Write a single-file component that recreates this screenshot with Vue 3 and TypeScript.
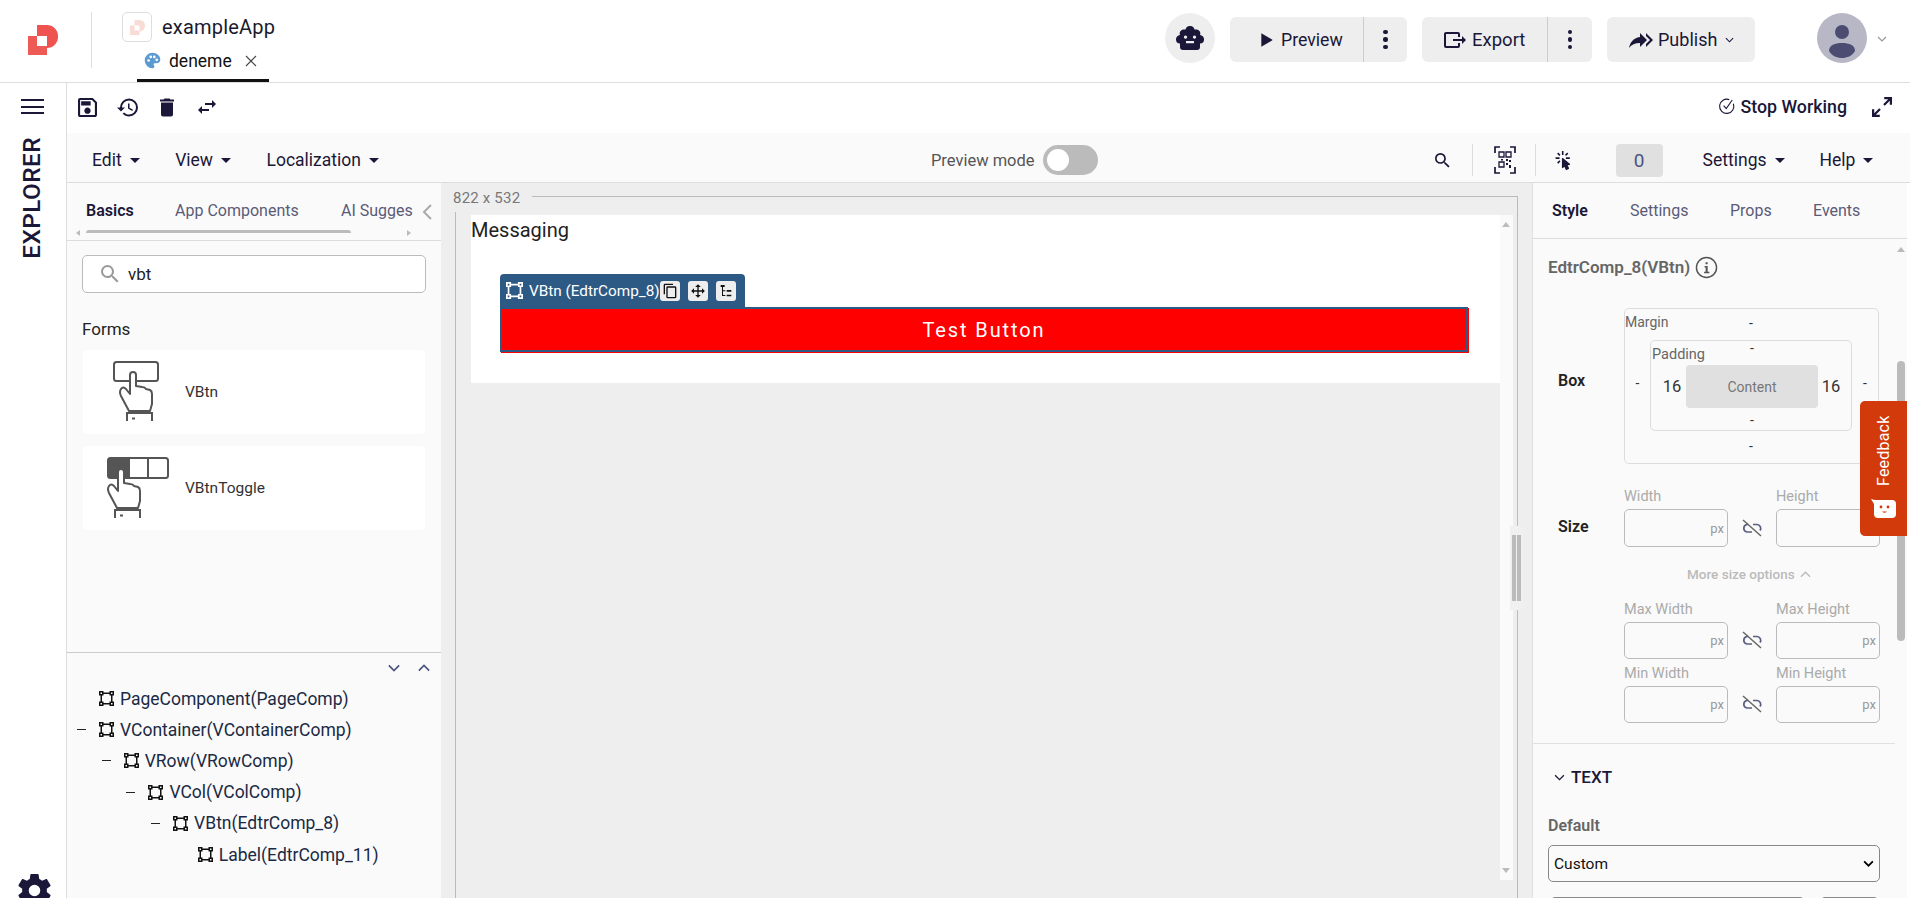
<script setup lang="ts">
const ic = {
  save: 'M17 3H5C3.89 3 3 3.9 3 5V19C3 20.1 3.89 21 5 21H19C20.1 21 21 20.1 21 19V7L17 3M19 19H5V5H16.17L19 7.83V19M12 12C10.34 12 9 13.34 9 15S10.34 18 12 18 15 16.66 15 15 13.66 12 12 12M6 6H15V10H6V6Z',
  history: 'M13.5,8H12V13L16.28,15.54L17,14.33L13.5,12.25V8M13,3A9,9 0 0,0 4,12H1L4.96,16.03L9,12H6A7,7 0 0,1 13,5A7,7 0 0,1 20,12A7,7 0 0,1 13,19C11.07,19 9.32,18.21 8.06,16.94L6.64,18.36C8.27,20 10.5,21 13,21A9,9 0 0,0 22,12A9,9 0 0,0 13,3',
  trash: 'M19,4H15.5L14.5,3H9.5L8.5,4H5V6H19M6,19A2,2 0 0,0 8,21H16A2,2 0 0,0 18,19V7H6V19Z',
  swap: 'M21,9L17,5V8H10V10H17V13M7,11L3,15L7,19V16H14V14H7V11Z',
  exportI: 'M23,12L19,8V11H10V13H19V16M1,18V6C1,4.89 1.9,4 3,4H15A2,2 0 0,1 17,6V9H15V6H3V18H15V15H17V18A2,2 0 0,1 15,20H3A2,2 0 0,1 1,18Z',
  publish: 'M11 5L18 12L11 19V14.9C6 14.9 2.5 16.5 0 20C1 15 4 10 11 9V5M17 5L24 12L17 19V16L21 12L17 8Z',
  expand: 'M10,21V19H6.41L10.91,14.5L9.5,13.09L5,17.59V14H3V21H10M14.5,10.91L19,6.41V10H21V3H14V5H17.59L13.09,9.5L14.5,10.91Z',
  search: 'M9.5,3A6.5,6.5 0 0,1 16,9.5C16,11.11 15.41,12.59 14.44,13.73L14.71,14H15.5L20.5,19L19,20.5L14,15.5V14.71L13.73,14.44C12.59,15.41 11.11,16 9.5,16A6.5,6.5 0 0,1 3,9.5A6.5,6.5 0 0,1 9.5,3M9.5,5C7,5 5,7 5,9.5C5,12 7,14 9.5,14C12,14 14,12 14,9.5C14,7 12,5 9.5,5Z',
  click: 'M10.76,8.69A0.76,0.76 0 0,0 10,9.45V20.9C10,21.32 10.34,21.66 10.76,21.66C10.95,21.66 11.11,21.6 11.24,21.5L13.15,19.95L14.81,23.57C14.94,23.84 15.21,24 15.5,24C15.61,24 15.72,24 15.83,23.92L18.59,22.64C18.97,22.46 19.15,22 18.95,21.63L17.28,18L19.69,17.55C19.85,17.5 20,17.43 20.12,17.29C20.39,16.97 20.35,16.5 20,16.21L11.26,8.86L11.25,8.87C11.12,8.76 10.95,8.69 10.76,8.69M15,10V8H20V10H15M13.83,4.76L16.66,1.93L18.07,3.34L15.24,6.17L13.83,4.76M10,0H12V5H10V0M3.93,14.66L6.76,11.83L8.17,13.24L5.34,16.07L3.93,14.66M3.93,3.34L5.34,1.93L8.17,4.76L6.76,6.17L3.93,3.34M7,10H2V8H7V10',
  square: 'M2,2H8V4H16V2H22V8H20V16H22V22H16V20H8V22H2V16H4V8H2V2M16,8V6H8V8H6V16H8V18H16V16H18V8H16M4,4V6H6V4H4M18,4V6H20V4H18M4,18V20H6V18H4M18,18V20H20V18H18Z',
  copy: 'M19,21H8V7H19M19,5H8A2,2 0 0,0 6,7V21A2,2 0 0,0 8,23H19A2,2 0 0,0 21,21V7A2,2 0 0,0 19,5M16,1H4A2,2 0 0,0 2,3V17H4V3H16V1Z',
  move: 'M13,6V11H18V7.75L22.25,12L18,16.25V13H13V18H16.25L12,22.25L7.75,18H11V13H6V16.25L1.75,12L6,7.75V11H11V6H7.75L12,1.75L16.25,6H13Z',
  tree: 'M4 3H10V6H4ZM6 6H7.5V18H11V19.5H6ZM7 11H11V12.5H7ZM13 10.500H20V13H13ZM13 17.500H20V20H13Z',
  gear: 'M12,15.5A3.5,3.5 0 0,1 8.5,12A3.5,3.5 0 0,1 12,8.5A3.5,3.5 0 0,1 15.5,12A3.5,3.5 0 0,1 12,15.5M19.43,12.97C19.47,12.65 19.5,12.33 19.5,12C19.5,11.67 19.47,11.34 19.43,11L21.54,9.37C21.73,9.22 21.78,8.95 21.66,8.73L19.66,5.27C19.54,5.05 19.27,4.96 19.05,5.05L16.56,6.05C16.04,5.66 15.5,5.32 14.87,5.07L14.5,2.42C14.46,2.18 14.25,2 14,2H10C9.75,2 9.54,2.18 9.5,2.42L9.13,5.07C8.5,5.32 7.96,5.66 7.44,6.05L4.95,5.05C4.73,4.96 4.46,5.05 4.34,5.27L2.34,8.73C2.21,8.95 2.27,9.22 2.46,9.37L4.57,11C4.53,11.34 4.5,11.67 4.5,12C4.5,12.33 4.53,12.65 4.57,12.97L2.46,14.63C2.27,14.78 2.21,15.05 2.34,15.27L4.34,18.73C4.46,18.95 4.73,19.03 4.95,18.95L7.44,17.94C7.96,18.34 8.5,18.68 9.13,18.93L9.5,21.58C9.54,21.82 9.75,22 10,22H14C14.25,22 14.46,21.82 14.5,21.58L14.87,18.93C15.5,18.67 16.04,18.34 16.56,17.94L19.05,18.95C19.27,19.03 19.54,18.95 19.66,18.73L21.66,15.27C21.78,15.05 21.73,14.78 21.54,14.63L19.43,12.97Z',
  info: 'M11 6.500h2.200v2.200H11ZM10 10.500h3.200v6H15V18H9.500v-1.500h1.600v-4.500H10Z',
}
const hand = 'M16 50L8 35Q6 31 8 28Q10 25 13 28L17 33V14A3 3 0 0 1 23 14V25L29 26Q32 26 33 28L37 29Q39 30 39 33V43L37 50Z'
const menus = ['Edit', 'View', 'Localization']
const leftTabs = [
  { t: 'Basics', on: true, w: 89 },
  { t: 'App Components', on: false, w: 166 },
  { t: 'AI Sugges', on: false, w: 81 },
]
const rightTabs = [
  { t: 'Style', on: true, w: 78 },
  { t: 'Settings', on: false, w: 100 },
  { t: 'Props', on: false, w: 83 },
  { t: 'Events', on: false, w: 70 },
]
const treeRows = [
  { t: 'PageComponent(PageComp)', d: 0, dash: false },
  { t: 'VContainer(VContainerComp)', d: 0, dash: true },
  { t: 'VRow(VRowComp)', d: 1, dash: true },
  { t: 'VCol(VColComp)', d: 2, dash: true },
  { t: 'VBtn(EdtrComp_8)', d: 3, dash: true },
  { t: 'Label(EdtrComp_11)', d: 4, dash: false },
]
const sizeRows = [
  { a: 'Max Width', b: 'Max Height' },
  { a: 'Min Width', b: 'Min Height' },
]
</script>

<template>
  <div class="app">
    <header class="top">
      <div class="logo-wrap">
        <svg class="logo" viewBox="0 0 30 30">
          <path fill="#ef5350" d="M9 0H19A11 11 0 0 1 30 11V12A11 11 0 0 1 19 23V11H9Z" />
          <path fill="#ee5a55" d="M0 11H9V21H19V30H0Z" />
        </svg>
      </div>
      <div class="app-info">
        <div class="app-name">
          <span class="app-ico">
            <svg viewBox="0 0 30 30"><path fill="#f9dcd6" d="M9 0H19A11 11 0 0 1 30 11V12A11 11 0 0 1 19 23V11H9Z" /><path fill="#f9dcd6" d="M0 11H9V21H19V30H0Z" /></svg>
          </span>
          <span>exampleApp</span>
        </div>
        <div class="file-tab">
          <svg class="palette" viewBox="0 0 24 24"><path fill="#5b9bd1" d="M12 1a11 11 0 0 0 0 22c1.600 0 2.600-1.100 2.600-2.500 0-.7-.3-1.200-.6-1.700-.3-.4-.5-.8-.5-1.300 0-1 .8-1.700 1.800-1.700h2.200A5.500 5.500 0 0 0 23 10.500C23 5.200 18 1 12 1Z" /><g fill="#fff"><circle cx="6.500" cy="12" r="1.900" /><circle cx="9.500" cy="7" r="1.900" /><circle cx="14.500" cy="7" r="1.900" /><circle cx="18" cy="11" r="1.900" /></g></svg>
          <span>deneme</span>
          <svg class="close" viewBox="0 0 12 12"><path d="M1 1L11 11M11 1L1 11" stroke="#444" stroke-width="1.100" fill="none" /></svg>
        </div>
      </div>
      <div class="top-actions">
        <span class="robot">
          <svg viewBox="0 0 28 24" width="28" height="24"><path fill-rule="evenodd" fill="#1a1738" d="M14 0a4.500 4.500 0 0 1 4.500 3.500H21a4 4 0 0 1 3 5.500 4.200 4.200 0 0 1 4 4.500 4 4 0 0 1-4 4V21a3 3 0 0 1-3 3H7a3 3 0 0 1-3-3v-3.500a4 4 0 0 1-4-4A4.200 4.200 0 0 1 4 9 4 4 0 0 1 7 3.500h2.500A4.500 4.500 0 0 1 14 0ZM10 15v2.200h8V15ZM9.500 9.500a1.600 1.600 0 1 0 .01 0ZM18.500 9.500a1.600 1.600 0 1 0 .01 0Z" /></svg>
        </span>
        <div class="btn-group g-preview">
          <div class="btn-main"><svg class="play" viewBox="0 0 12 14"><path d="M1 1L11 7L1 13Z" fill="#1a1738" /></svg><span>Preview</span></div>
          <div class="btn-more"><i /><i /><i /></div>
        </div>
        <div class="btn-group g-export">
          <div class="btn-main"><svg class="ex" viewBox="0 0 24 24"><path :d="ic.exportI" fill="#1a1738" /></svg><span>Export</span></div>
          <div class="btn-more"><i /><i /><i /></div>
        </div>
        <div class="btn-group g-publish">
          <div class="btn-main"><svg class="pub" viewBox="0 0 24 24"><path :d="ic.publish" fill="#1a1738" /></svg><span>Publish</span><svg class="chev" viewBox="0 0 10 6"><path d="M1 1L5 5L9 1" fill="none" stroke="#1a1738" stroke-width="1.200" /></svg></div>
        </div>
        <span class="avatar">
          <svg viewBox="0 0 50 50" width="50" height="50"><circle cx="25" cy="25" r="25" fill="#b7b7c6" /><circle cx="25" cy="19" r="7" fill="#4c4c73" /><path d="M12 38c0-6 6-8 13-8s13 2 13 8c-3 5-8 7-13 7s-10-2-13-7Z" fill="#4c4c73" /></svg>
        </span>
        <svg class="avatar-chev" viewBox="0 0 10 6"><path d="M1 1L5 5L9 1" fill="none" stroke="#999" stroke-width="1.200" /></svg>
      </div>
    </header>

    <div class="body">
      <aside class="rail">
        <div class="hamb"><i /><i /><i /></div>
        <div class="explorer">EXPLORER</div>
        <svg class="gear" viewBox="2 2 20 20"><path :d="ic.gear" fill="#1a1738" /></svg>
      </aside>

      <main class="main">
        <div class="tools">
          <svg class="t t-save" viewBox="3 3 18 18"><path :d="ic.save" fill="#1a1738" /></svg>
          <svg class="t t-hist" viewBox="1 3 21 18"><path :d="ic.history" fill="#1a1738" /></svg>
          <svg class="t t-trash" viewBox="5 3 14 18"><path :d="ic.trash" fill="#1a1738" /></svg>
          <svg class="t t-swap" viewBox="3 5 18 14"><path :d="ic.swap" fill="#1a1738" /></svg>
          <div class="stop">
            <svg viewBox="0 0 24 24" class="stop-ic"><path d="M20.500 9A9.500 9.500 0 1 1 15 3.500" fill="none" stroke="#1a1738" stroke-width="1.500" /><path d="M7.500 11.500L11 15.500L19 4" fill="none" stroke="#1a1738" stroke-width="1.500" /></svg>
            <span>Stop Working</span>
          </div>
          <svg class="t-exp" viewBox="3 3 18 18"><path :d="ic.expand" fill="#1a1738" /></svg>
        </div>

        <div class="menubar">
          <div v-for="m in menus" :key="m" class="menu"><span>{{ m }}</span><b class="caret" /></div>
          <div class="pm"><span>Preview mode</span><span class="switch"><i /></span></div>
          <svg class="mb-search" viewBox="3 3 18 18"><path :d="ic.search" fill="#1a1738" /></svg>
          <span class="vr v1" />
          <svg class="qr" viewBox="0 0 22 30">
            <path d="M1 8V2H6M16 2H21V8M1 22V28H6M16 28H21V22" fill="none" stroke="#1a1738" stroke-width="1.700" />
            <path d="M5 7H10V12H5ZM12 7H17V12H12ZM5 17H10V22H5Z" fill="none" stroke="#1a1738" stroke-width="1.300" />
            <path d="M12 14H14V16H12ZM15 15H17V17H15ZM12 18H14V20H12ZM15 20H17V23H15ZM7 14H9V15.500H7Z" fill="#1a1738" />
          </svg>
          <span class="vr v2" />
          <svg class="cl" viewBox="0 0 24 24"><path :d="ic.click" fill="#1a1738" /></svg>
          <span class="zero">0</span>
          <div class="menu m-settings"><span>Settings</span><b class="caret" /></div>
          <div class="menu m-help"><span>Help</span><b class="caret" /></div>
        </div>

        <div class="work">
          <section class="left">
            <div class="ltabs">
              <span v-for="t in leftTabs" :key="t.t" class="ltab" :class="{ on: t.on }" :style="{ width: t.w + 'px' }">{{ t.t }}</span>
              <svg class="ltab-chev" viewBox="0 0 10 16"><path d="M9 1L2 8L9 15" fill="none" stroke="#aaa" stroke-width="2" /></svg>
            </div>
            <div class="lscroll"><i class="arr-l" /><span class="lthumb" /><i class="arr-r" /></div>
            <div class="search">
              <svg viewBox="3 3 18 18" class="s-ic"><path :d="ic.search" fill="#999" /></svg>
              <span>vbt</span>
            </div>
            <div class="forms">Forms</div>
            <div class="comp">
              <svg class="hand" viewBox="0 0 50 62" width="50" height="62">
                <rect x="1" y="1" width="44" height="19" rx="2.500" fill="none" stroke="#555" stroke-width="2" />
                <path :d="hand" fill="#fff" stroke="#555" stroke-width="2" stroke-linejoin="round" />
                <path d="M14 60V52H39V60" fill="none" stroke="#555" stroke-width="2" />
                <path d="M19 57.500H22" stroke="#555" stroke-width="2" />
              </svg>
              <span>VBtn</span>
            </div>
            <div class="comp c2">
              <svg class="hand h2" viewBox="0 0 62 62" width="62" height="62">
                <rect x="1" y="1" width="60" height="20" rx="2.500" fill="#fff" stroke="#555" stroke-width="2" />
                <path d="M1 3.500A2.500 2.500 0 0 1 3.500 1H23V21H3.500A2.500 2.500 0 0 1 1 18.500Z" fill="#555" />
                <path d="M41 1V21" stroke="#555" stroke-width="2" />
                <path :d="hand" fill="#fff" stroke="#555" stroke-width="2" stroke-linejoin="round" transform="translate(-6,1)" />
                <path d="M8 61V53H33V61" fill="none" stroke="#555" stroke-width="2" />
                <path d="M13 58.500H16" stroke="#555" stroke-width="2" />
              </svg>
              <span>VBtnToggle</span>
            </div>
            <div class="tree">
              <div class="tree-tools">
                <svg viewBox="0 0 14 9"><path d="M1 1.500L7 7.500L13 1.500" fill="none" stroke="#4a5580" stroke-width="2" /></svg>
                <svg viewBox="0 0 14 9"><path d="M1 7.500L7 1.500L13 7.500" fill="none" stroke="#4a5580" stroke-width="2" /></svg>
              </div>
              <div v-for="r in treeRows" :key="r.t" class="node" :style="{ paddingLeft: r.d * 24.7 + 'px' }">
                <span class="dash" :class="{ vis: r.dash }" />
                <svg viewBox="2 2 20 20" class="n-ic"><path :d="ic.square" fill="#111" /></svg>
                <span>{{ r.t }}</span>
              </div>
            </div>
          </section>

          <section class="canvas">
            <div class="dim"><span>822 x 532</span><i class="dim-line" /></div>
            <div class="frame">
              <div class="view">
                <div class="doc">
                  <div class="sheet">
                    <div class="msg">Messaging</div>
                    <div class="chip">
                      <svg viewBox="2 2 20 20" class="chip-ic"><path :d="ic.square" fill="#fff" /></svg>
                      <span class="chip-t">VBtn (EdtrComp_8)</span>
                      <span class="chip-b"><svg viewBox="1 0 21 24"><path :d="ic.copy" fill="#111" /></svg></span>
                      <span class="chip-b"><svg viewBox="0 0 24 24"><path :d="ic.move" fill="#111" /></svg></span>
                      <span class="chip-b"><svg viewBox="0 0 24 24"><path :d="ic.tree" fill="#111" /></svg></span>
                    </div>
                    <div class="test">Test Button</div>
                  </div>
                </div>
                <div class="vtrack"><i class="up" /><i class="down" /></div>
              </div>
            </div>
            <div class="grip"><i /><i /></div>
          </section>

          <section class="right">
            <div class="rtabs">
              <span v-for="t in rightTabs" :key="t.t" class="rtab" :class="{ on: t.on }" :style="{ width: t.w + 'px' }">{{ t.t }}</span>
            </div>
            <div class="props">
              <i class="p-up" /><span class="p-thumb" />
              <div class="ptitle"><span>EdtrComp_8(VBtn)</span>
                <svg viewBox="0 0 24 24" class="p-info"><circle cx="12" cy="12" r="10.500" fill="none" stroke="#555" stroke-width="1.500" /><path :d="ic.info" fill="#555" /></svg>
              </div>
              <div class="row-box">
                <span class="blabel">Box</span>
                <div class="mbox">
                  <span class="cap">Margin</span><span class="mtop">-</span>
                  <span class="mleft">-</span>
                  <div class="pbox">
                    <span class="cap pcap">Padding</span><span class="ptop">-</span>
                    <span class="pl">16</span>
                    <div class="content">Content</div>
                    <span class="pr">16</span>
                    <span class="pbot">-</span>
                  </div>
                  <span class="mright">-</span>
                  <span class="mbot">-</span>
                </div>
              </div>
              <div class="row-size">
                <span class="blabel slabel">Size</span>
                <div class="pair">
                  <div class="fld"><label>Width</label><div class="inp"><span>px</span></div></div>
                  <svg viewBox="0 0 22 18" class="lnk"><path d="M7 5.500H6A3.800 3.800 0 0 0 6 13H11M12 5.500H16A3.800 3.800 0 0 1 19 11.500" fill="none" stroke="#5a6080" stroke-width="1.700" /><path d="M2 1L20 17" stroke="#666" stroke-width="1.500" /></svg>
                  <div class="fld"><label>Height</label><div class="inp"><span>px</span></div></div>
                </div>
              </div>
              <div class="more"><span>More size options</span><svg viewBox="0 0 12 7"><path d="M1 6L6 1L11 6" fill="none" stroke="#bbb" stroke-width="1.500" /></svg></div>
              <div v-for="r in sizeRows" :key="r.a" class="pair pair-m">
                <div class="fld"><label>{{ r.a }}</label><div class="inp"><span>px</span></div></div>
                <svg viewBox="0 0 22 18" class="lnk"><path d="M7 5.500H6A3.800 3.800 0 0 0 6 13H11M12 5.500H16A3.800 3.800 0 0 1 19 11.500" fill="none" stroke="#5a6080" stroke-width="1.700" /><path d="M2 1L20 17" stroke="#666" stroke-width="1.500" /></svg>
                <div class="fld"><label>{{ r.b }}</label><div class="inp"><span>px</span></div></div>
              </div>
              <div class="hr" />
              <div class="sec"><svg viewBox="0 0 12 8"><path d="M1 1.500L6 6.500L11 1.500" fill="none" stroke="#1a1738" stroke-width="1.500" /></svg><span>TEXT</span></div>
              <div class="deflabel">Default</div>
              <div class="select"><span>Custom</span><svg viewBox="0 0 12 8"><path d="M1 1.500L6 6.500L11 1.500" fill="none" stroke="#000" stroke-width="2" /></svg></div>
              <div class="next"><i class="n1" /><i class="n2" /></div>
            </div>
          </section>
        </div>
      </main>
    </div>

    <div class="feedback">
      <span class="fb-t">Feedback</span>
      <svg viewBox="0 0 25 20" class="fb-i"><path d="M0 0L4 1H21Q25 1 25 5V15Q25 19 21 19H7Q3 19 3 15V5Z" fill="#fff" /><circle cx="10" cy="8" r="1.400" fill="#d23a0c" /><circle cx="17" cy="8" r="1.400" fill="#d23a0c" /><path d="M11 12.500Q13.500 15 16 12.500Z" fill="#d23a0c" /></svg>
    </div>
  </div>
</template>

<style>
html, body { margin: 0; overflow: hidden; background: #fff; }
</style>

<style scoped>
.app { position: relative; width: 1910px; height: 898px; overflow: hidden; display: flex; flex-direction: column; font-family: Roboto, "Liberation Sans", sans-serif; color: #1a1738; background: #fff; }
i, b { display: block; font-style: normal; }

.top { height: 82px; flex: none; display: flex; border-bottom: 1px solid #ddd; box-sizing: content-box; }
.logo-wrap { width: 92px; height: 56px; margin-top: 12px; box-sizing: border-box; border-right: 1px solid #ddd; padding: 13px 0 0 28px; }
.logo { width: 30px; height: 30px; display: block; }
.app-info { margin-left: 30px; display: flex; flex-direction: column; }
.app-name { display: flex; align-items: center; height: 30px; margin-top: 12px; font-size: 20px; color: #1a1a2e; gap: 10px; letter-spacing: .2px; }
.app-ico { width: 28px; height: 28px; border: 1px solid #ddd; border-radius: 5px; display: flex; align-items: center; justify-content: center; }
.app-ico svg { width: 15px; height: 15px; }
.file-tab { margin: 3px 0 0 15px; width: 132px; height: 37px; box-sizing: border-box; border-bottom: 3px solid #111; display: flex; align-items: center; padding-left: 7px; font-size: 17.500px; padding-bottom: 3px; color: #111; }
.palette { width: 17px; height: 17px; margin-right: 8px; }
.close { width: 12px; height: 12px; margin-left: 13px; }
.top-actions { margin-left: auto; display: flex; align-items: flex-start; padding-top: 13px; }
.robot { width: 50px; height: 50px; border-radius: 50%; background: #eee; display: flex; align-items: center; justify-content: center; margin-right: 15px; }
.btn-group { height: 45px; margin-top: 4px; background: #eee; border-radius: 6px; display: flex; font-size: 17.700px; color: #1a1738; }
.btn-main { display: flex; align-items: center; }
.btn-more { display: flex; flex-direction: column; align-items: center; justify-content: center; gap: 3px; border-left: 1px solid #ccc; }
.btn-more i { width: 4.500px; height: 4.500px; border-radius: 50%; background: #1a1738; }
.g-preview { width: 177px; margin-right: 15px; }
.g-preview .btn-main { width: 133px; padding-left: 30px; box-sizing: border-box; }
.g-preview .btn-more { flex: 1; }
.play { width: 14px; height: 16px; margin-left: 0; margin-right: 7px; }
.g-export { width: 170px; margin-right: 15px; }
.g-export .btn-main { width: 125px; padding-left: 21px; box-sizing: border-box; font-size: 18.500px; }
.g-export .btn-more { flex: 1; }
.ex { width: 24px; height: 24px; margin-right: 5px; }
.g-publish { width: 148px; margin-right: 62px; }
.g-publish .btn-main { padding-left: 22px; font-size: 18px; }
.pub { width: 24px; height: 24px; margin-right: 5px; }
.chev { width: 9px; height: 6px; margin-left: 8px; }
.avatar { width: 50px; height: 50px; display: block; }
.avatar-chev { width: 10px; height: 6px; margin: 23px 23px 0 10px; }

.body { flex: 1; min-height: 0; display: flex; }
.rail { width: 66px; flex: none; border-right: 1px solid #ddd; display: flex; flex-direction: column; align-items: center; box-sizing: content-box; }
.hamb { margin-top: 16px; margin-left: -2px; width: 23px; display: flex; flex-direction: column; gap: 4.500px; }
.hamb i { height: 2px; background: #1a1738; }
.explorer { margin-top: 23px; margin-left: -2px; writing-mode: vertical-rl; transform: rotate(180deg); font-size: 24.400px; font-weight: 500; letter-spacing: .4px; line-height: 26px; }
.gear { margin-top: auto; margin-bottom: -9px; margin-left: 3px; width: 33px; height: 33px; }

.main { flex: 1; min-width: 0; display: flex; flex-direction: column; }
.tools { height: 50px; flex: none; box-sizing: border-box; padding-bottom: 2px; display: flex; align-items: center; padding-left: 11px; }
.t { display: block; }
.t-save { width: 19px; height: 19px; margin-right: 20px; }
.t-hist { width: 21px; height: 19px; margin-right: 22px; }
.t-trash { width: 14px; height: 19px; margin-right: 24px; }
.t-swap { width: 18px; height: 14px; }
.stop { margin-left: auto; display: flex; align-items: center; font-size: 17.800px; font-weight: 500; margin-right: 25px; margin-bottom: 2px; }
.stop-ic { width: 18px; height: 18px; margin-right: 4px; }
.t-exp { width: 20px; height: 20px; margin-right: 18px; }

.menubar { height: 44px; padding-top: 5px; flex: none; background: #fafafa; border-bottom: 1px solid #ddd; box-sizing: content-box; display: flex; align-items: center; padding-left: 25px; font-size: 17.500px; position: relative; }
.menu { display: flex; align-items: center; margin-right: 35.500px; }
.caret { width: 0; height: 0; border-left: 5.500px solid transparent; border-right: 5.500px solid transparent; border-top: 5.500px solid #1a1738; margin-left: 8px; }
.pm { margin-left: 516.500px; display: flex; align-items: center; font-size: 16.500px; color: #555; }
.switch { width: 55px; height: 30px; border-radius: 15px; background: #bbb; margin-left: 8px; position: relative; display: block; }
.switch i { width: 22px; height: 22px; background: #fff; border-radius: 50%; margin: 4px; }
.mb-search { width: 15px; height: 15px; margin-left: 337px; }
.vr { width: 1px; height: 32px; background: #ddd; display: block; }
.v1 { margin-left: 22px; }
.qr { width: 22px; height: 30px; margin-left: 21px; }
.v2 { margin-left: 19px; }
.cl { width: 19px; height: 21px; margin-left: 18px; }
.zero { margin-left: 43px; width: 47px; height: 33px; background: #e0e0e0; border-radius: 4px; display: flex; align-items: center; justify-content: center; color: #4a5580; font-size: 19px; }
.m-settings { margin-left: 40px; margin-right: 0; }
.m-help { margin-left: 35px; margin-right: 0; }

.work { flex: 1; min-height: 0; display: flex; padding-right: 3px; }

.left { width: 374px; flex: none; background: #fafafa; display: flex; flex-direction: column; }
.ltabs { height: 47px; flex: none; box-sizing: border-box; padding-top: 7px; display: flex; align-items: center; padding-left: 19px; font-size: 16px; position: relative; overflow: hidden; }
.ltab { color: #5a5a78; white-space: nowrap; flex: none; }
.ltab.on { color: #1a1738; font-weight: 600; }
.ltab-chev { position: absolute; left: 355px; top: 21px; width: 10px; height: 16px; }
.lscroll { height: 10px; flex: none; border-bottom: 1px solid #ddd; position: relative; box-sizing: content-box; display: flex; align-items: flex-start; }
.lthumb { position: absolute; left: 19px; top: 0; width: 265px; height: 3px; background: #bbb; border-radius: 3px 3px 0 0; display: block; }
.arr-l { position: absolute; left: 9px; top: 0; border-right: 4px solid #bbb; border-top: 3px solid transparent; border-bottom: 3px solid transparent; }
.arr-r { position: absolute; left: 340px; top: 0; border-left: 4px solid #bbb; border-top: 3px solid transparent; border-bottom: 3px solid transparent; }
.search { margin: 14px 0 0 15px; width: 344px; height: 38px; box-sizing: border-box; border: 1px solid #bbb; border-radius: 5px; background: #fff; display: flex; align-items: center; padding-left: 18px; font-size: 17px; color: #222; }
.s-ic { width: 18px; height: 18px; margin-right: 9px; }
.forms { margin: 26px 0 0 15px; font-size: 17px; line-height: 20px; color: #222; }
.comp { margin: 11px 0 0 16px; width: 342px; height: 84px; background: #fff; border-radius: 4px; display: flex; align-items: center; font-size: 15.500px; color: #333; padding-left: 30px; box-sizing: border-box; flex: none; }
.comp .hand { margin-right: 22px; margin-top: -1px; }
.c2 { margin-top: 12px; padding-left: 24px; }
.comp .h2 { margin-right: 16px; margin-top: 0; }
.tree { margin-top: auto; height: 246px; flex: none; box-sizing: border-box; border-top: 1px solid #ccc; padding-top: 9px; font-size: 17.500px; color: #1a2a44; }
.tree-tools { display: flex; justify-content: flex-end; gap: 18px; padding-right: 11px; height: 17px; margin-bottom: 4px; }
.tree-tools svg { width: 12px; height: 8px; display: block; margin-top: 2px; }
.node { height: 31.200px; display: flex; align-items: center; white-space: nowrap; box-sizing: content-box; margin-left: 10px; }
.dash { width: 9px; height: 1px; margin-right: 13px; display: block; flex: none; }
.dash.vis { background: #222; }
.n-ic { width: 15px; height: 15px; margin-right: 6px; flex: none; }

.canvas { width: 1091px; flex: none; background: #eee; border-right: 1px solid #e0e0e0; box-sizing: content-box; position: relative; display: flex; flex-direction: column; }
.dim { height: 29px; flex: none; display: flex; align-items: flex-start; padding-left: 12px; font-size: 15px; color: #777; }
.dim span { margin-top: 6px; line-height: 18px; letter-spacing: .2px; }
.dim-line { flex: 1; margin: 13px 14px 0 12px; height: 16px; border-top: 1px solid #bbb; border-right: 1px solid #bbb; }
.frame { flex: 1; min-height: 0; margin: 0 14px 0 14px; border-left: 1px solid #bbb; border-right: 1px solid #bbb; padding: 3px 4px 0 15px; }
.view { height: 665px; display: flex; }
.doc { flex: 1; min-width: 0; }
.sheet { background: #fff; height: 168px; }
.msg { font-size: 20px; line-height: 30px; color: #222; height: 59px; }
.chip { margin-left: 29px; width: 245px; height: 33px; box-sizing: border-box; background: #2c5a85; border-radius: 4px 4px 0 0; display: flex; align-items: center; padding-left: 6px; color: #fff; font-size: 15.300px; font-weight: 400; }
.chip-ic { width: 17px; height: 17px; margin-right: 6px; flex: none; }
.chip-t { white-space: nowrap; width: 131px; flex: none; }
.chip-b { width: 20px; height: 20px; background: #eee; border-radius: 3px; margin-right: 8px; display: flex; align-items: center; justify-content: center; flex: none; }
.chip-b svg { width: 16px; height: 16px; }
.test { margin-left: 29px; width: 968px; height: 45px; box-sizing: border-box; border: 2px solid #2c5a85; background: #f00; color: #fff; display: flex; align-items: center; justify-content: center; font-size: 20px; font-weight: 400; letter-spacing: 1.900px; box-shadow: 1px 1px 0 #f00; }
.vtrack { width: 13px; flex: none; background: #fafafa; position: relative; }
.up { position: absolute; left: 2px; top: 7px; border-left: 4px solid transparent; border-right: 4px solid transparent; border-bottom: 5px solid #bbb; }
.down { position: absolute; left: 2px; bottom: 7px; border-left: 4px solid transparent; border-right: 4px solid transparent; border-top: 5px solid #bbb; }
.grip { position: absolute; left: 1069px; top: 343px; width: 13px; height: 84px; background: #f0f0f0; display: flex; gap: 1px; justify-content: center; padding-top: 9px; box-sizing: border-box; }
.grip i { width: 4px; height: 66px; background: #bbb; }

.right { width: 374px; flex: none; background: #fafafa; display: flex; flex-direction: column; min-height: 0; }
.rtabs { height: 56px; flex: none; box-sizing: border-box; border-bottom: 1px solid #ddd; display: flex; align-items: center; padding-left: 19px; font-size: 16px; }
.rtab { color: #5a5a78; flex: none; }
.rtab.on { color: #1a1738; font-weight: 600; }
.props { flex: 1; min-height: 0; position: relative; padding-left: 15px; overflow: hidden; }
.p-up { position: absolute; left: 364px; top: 8px; border-left: 4px solid transparent; border-right: 4px solid transparent; border-bottom: 5px solid #bbb; }
.p-thumb { position: absolute; left: 364px; top: 122px; width: 8px; height: 280px; border-radius: 4px; background: #bbb; display: block; }
.ptitle { display: flex; align-items: center; height: 24px; margin-top: 16px; font-size: 17px; font-weight: 600; color: #666; }
.p-info { width: 23px; height: 23px; margin-left: 5px; }
.row-box { display: flex; margin-top: 29px; }
.blabel { width: 66px; margin-left: 10px; font-size: 16px; font-weight: 600; color: #222; line-height: 20px; padding-top: 63px; flex: none; }
.mbox { width: 255px; height: 156px; box-sizing: border-box; border: 1px solid #ddd; border-radius: 5px; display: grid; grid-template-columns: 25px 202px 1fr; grid-template-rows: 31px 91px 1fr; font-size: 14px; color: #333; }
.cap { font-size: 14px; color: #666; grid-row: 1; grid-column: 1 / 3; line-height: 27px; }
.mtop { grid-row: 1; grid-column: 2; text-align: center; line-height: 28px; }
.mleft { grid-row: 2; grid-column: 1; text-align: center; line-height: 87px; }
.mright { grid-row: 2; grid-column: 3; text-align: center; line-height: 87px; }
.mbot { grid-row: 3; grid-column: 2; text-align: center; line-height: 30px; }
.pbox { grid-row: 2; grid-column: 2; border: 1px solid #ddd; border-radius: 5px; display: grid; grid-template-columns: 35px 132px 1fr; grid-template-rows: 24px 43px 1fr; }
.pcap { grid-row: 1; grid-column: 1 / 3; line-height: 27px; margin-left: 1px; font-size: 14.500px; }
.ptop { grid-row: 1; grid-column: 2; text-align: center; line-height: 14px; }
.pl, .pr { grid-row: 2; text-align: center; font-size: 16.500px; line-height: 43px; }
.pl { grid-column: 1; padding-left: 7px; }
.pr { grid-column: 3; padding-right: 7px; }
.content { grid-row: 2; grid-column: 2; background: #e0e0e0; border-radius: 4px; display: flex; align-items: center; justify-content: center; font-size: 14px; color: #777; }
.pbot { grid-row: 3; grid-column: 2; text-align: center; line-height: 24px; }
.row-size { display: flex; margin-top: 23px; }
.slabel { padding-top: 30px; }
.pair { display: flex; align-items: flex-end; }
.pair-m { margin-left: 76px; margin-bottom: 5px; }
.fld { display: flex; flex-direction: column; }
.fld label { font-size: 14.500px; color: #aaa; line-height: 20px; height: 22px; }
.inp { width: 104px; height: 38px; box-sizing: border-box; border: 1px solid #bbb; border-radius: 5px; display: flex; align-items: center; justify-content: flex-end; padding-right: 3px; font-size: 13px; color: #999; }
.lnk { width: 22px; height: 18px; margin: 0 13px 10px 13px; }
.more { margin: 17px 0 16px 139px; height: 20px; display: flex; align-items: center; font-size: 13.500px; font-weight: 500; color: #bbb; gap: 5px; }
.more svg { width: 11px; height: 7px; }
.pair-m .inp { height: 37px; }
.hr { height: 1px; background: #e0e0e0; margin: 20px 12px 0 -15px; }
.sec { margin: 22px 0 0 6px; height: 22px; display: flex; align-items: center; gap: 6px; font-size: 17px; font-weight: 500; color: #1a1738; }
.sec svg { width: 11px; height: 7px; }
.deflabel { margin-top: 28px; font-size: 16px; font-weight: 600; color: #666; line-height: 20px; }
.select { margin-top: 9px; width: 332px; height: 37px; box-sizing: border-box; border: 1px solid #888; border-radius: 5px; display: flex; align-items: center; justify-content: space-between; padding: 0 5px; font-size: 15.500px; color: #111; }
.select svg { width: 11px; height: 7px; }
.next { display: flex; margin-top: 15px; gap: 15px; }
.n1, .n2 { height: 10px; border: 1px solid #888; border-radius: 5px; box-sizing: border-box; }
.n1 { width: 255px; margin-left: 2px; }
.n2 { width: 59px; }

.feedback { position: absolute; right: 3px; top: 401px; width: 47px; height: 135px; background: #d23a0c; border-radius: 5px 0 0 5px; display: flex; flex-direction: column; align-items: center; color: #fff; }
.fb-t { writing-mode: vertical-rl; transform: rotate(180deg); font-size: 16px; margin-top: 14px; height: 71px; line-height: 18px; letter-spacing: .2px; }
.fb-i { width: 25px; height: 20px; margin-top: 13px; }
</style>
